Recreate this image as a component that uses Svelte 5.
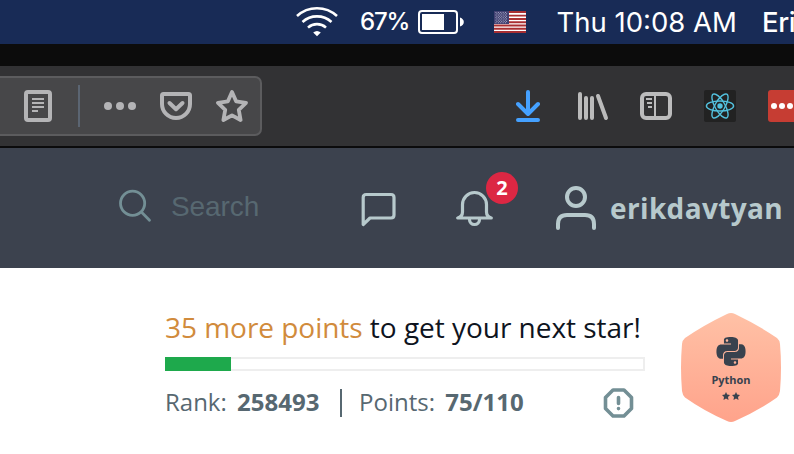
<script>
  const rank = 258493;
  const points = 75;
  const goal = 110;
  const left = goal - points;
  const progress = 13.75;
  const user = 'erikdavtyan';
  const flagStars = [0, 1, 2, 3, 4, 5, 6, 7, 8];
</script>

<div class="screen">
  <div class="menubar">
    <svg class="wifi" viewBox="296 6 42 32" fill="none" stroke="#fff" stroke-width="2.6">
      <path d="M297 16 A29.5 29.5 0 0 1 337 16" />
      <path d="M302.500 22 A21.500 21.500 0 0 1 331.500 22" />
      <path d="M308 27.600 A13.500 13.500 0 0 1 326 27.600" />
      <path d="M313.200 32.600 Q317 29.500 320.800 32.600 L317 36.200Z" fill="#fff" stroke="none" />
    </svg>
    <span class="percent">67%</span>
    <svg class="battery" viewBox="418 9 46 26">
      <rect x="419" y="11" width="38" height="22" rx="3" fill="none" stroke="#fff" stroke-width="2" />
      <rect x="422" y="14" width="22" height="16" fill="#fff" />
      <path d="M460 17.500 Q463.800 19 463.800 22 Q463.800 25 460 26.500Z" fill="#fff" />
    </svg>
    <svg class="flag" viewBox="0 0 32 22">
      <rect width="32" height="22" fill="#fff" />
      <path d="M0 1h32M0 4.600h32M0 8h32M0 11.300h32M0 14.500h32M0 17.700h32M0 21h32" stroke="#a92f32" stroke-width="1.900" />
      <rect width="15" height="13" fill="#414172" />
      {#each flagStars as row}
        <path d="M{row % 2 ? 2.500 : 1.500} {1.500 + row * 1.280}h12" stroke="#c9c9de" stroke-width=".8" stroke-dasharray=".9 1.500" />
      {/each}
    </svg>
    <span class="clock">Thu 10:08 AM</span>
    <span class="owner">Eri</span>
  </div>

  <div class="gap"></div>

  <div class="toolbar">
    <div class="urlbar">
      <svg class="reader" viewBox="24 90 28 32">
        <rect x="26" y="92" width="24" height="28" rx="2" fill="none" stroke="#b4b4b6" stroke-width="4" />
        <path d="M32 99h12M32 103h12M32 107h12M32 111h6" stroke="#b4b4b6" stroke-width="2" />
      </svg>
      <span class="rule"></span>
      <svg class="more" viewBox="104 102 32 8" fill="#b4b4b6">
        <circle cx="108" cy="106" r="4" /><circle cx="120" cy="106" r="4" /><circle cx="132" cy="106" r="4" />
      </svg>
      <svg class="pocket" viewBox="160 91 32 30" fill="none" stroke="#b4b4b6" stroke-width="4" stroke-linecap="round" stroke-linejoin="round">
        <path d="M163.500 94H188.500Q190 94 190 95.500V104A14 14 0 0 1 162 104V95.500Q162 94 163.500 94Z" />
        <path d="M169.500 103L176 109.200L182.500 103" />
      </svg>
      <svg class="star" viewBox="216 90 32 32" fill="none" stroke="#b4b4b6" stroke-width="3.800" stroke-linejoin="round">
        <path d="M232 92L236.100 101.300L246 102.800L238.800 109.800L240.600 120L232 115.300L223.400 120L225.200 109.800L218 102.800L227.900 101.300Z" />
      </svg>
    </div>
    <svg class="download" viewBox="516 90 24 32" fill="none" stroke="#45a1ff" stroke-width="4" stroke-linecap="round" stroke-linejoin="round">
      <path d="M528 92V113M518 104L528 114L538 104M518 120H538" />
    </svg>
    <svg class="library" viewBox="577 90 32 32" stroke="#bbb" stroke-width="4" stroke-linecap="round">
      <path d="M580 94V118M586 98V118M592 98V118M598 96L606 118" />
    </svg>
    <svg class="sidebar" viewBox="640 92 32 28" fill="none" stroke="#bcbcbd">
      <rect x="642" y="94" width="28" height="24" rx="4" stroke-width="4" />
      <path d="M655 95V117" stroke-width="2" />
      <path d="M646 99h6M647 103h5M648 107h4" stroke-width="2" />
    </svg>
    <svg class="react" viewBox="704 90 32 32" fill="none" stroke="#53c1de" stroke-width="1.400">
      <rect x="704" y="90" width="32" height="32" rx="2" fill="#222" stroke="none" />
      <ellipse cx="720" cy="106" rx="13.600" ry="5" />
      <ellipse cx="720" cy="106" rx="13.600" ry="5" transform="rotate(60 720 106)" />
      <ellipse cx="720" cy="106" rx="13.600" ry="5" transform="rotate(120 720 106)" />
      <circle cx="720" cy="106" r="2.700" fill="#53c1de" stroke="none" />
    </svg>
    <svg class="pass" viewBox="768 90 32 32" fill="#fff">
      <rect x="768" y="90" width="32" height="32" rx="3" fill="#c63d33" />
      <circle cx="774" cy="106" r="3" /><circle cx="782" cy="106" r="3" /><circle cx="790" cy="106" r="3" />
    </svg>
  </div>

  <header>
    <svg class="magnifier" viewBox="118 189 34 34" fill="none" stroke="#738f95" stroke-width="2.800" stroke-linecap="round">
      <circle cx="132.600" cy="203.300" r="12.100" /><path d="M141.600 212.200L149.500 220.200" />
    </svg>
    <span class="search">Search</span>
    <svg class="chat" viewBox="360 192 38 36" fill="none" stroke="#b7c9cc" stroke-width="3.200" stroke-linejoin="round">
      <path d="M363.200 224.500V197.500Q363.200 194.500 366.200 194.500H391Q394 194.500 394 197.500V215Q394 218 391 218H370Z" />
    </svg>
    <div class="alerts">
      <svg class="bell" viewBox="455 190 40 38" fill="none" stroke="#b7c9cc" stroke-width="3.200" stroke-linecap="round" stroke-linejoin="round">
        <path d="M457.700 218H491.300Q486.500 216.500 486.500 212V204.500A12 12 0 0 0 462.500 204.500V212Q462.500 216.500 457.700 218Z" />
        <path d="M469.500 219.500A5 5 0 0 0 479.500 219.500" />
      </svg>
      <span class="badge">2</span>
    </div>
    <svg class="person" viewBox="555 185 42 46" fill="none" stroke="#b7c9cc" stroke-width="4" stroke-linecap="round">
      <circle cx="576" cy="197" r="9" />
      <path d="M558 228V224Q558 215 567 215H585Q594 215 594 224V228" />
    </svg>
    <span class="name">{user}</span>
  </header>

  <main>
    <section class="stats">
      <p class="headline"><span class="need">{left} more points</span> to get your next star!</p>
      <div class="track"><div class="fill" style="width: {progress}%"></div></div>
      <div class="figures">
        <span class="rank">Rank: <b>{rank}</b></span>
        <span class="divider"></span>
        <span class="points">Points: <b>{points}/{goal}</b></span>
        <svg class="info" viewBox="603 387 31 31" fill="none" stroke="#738f95" stroke-width="3.600" stroke-linecap="round" stroke-linejoin="round">
          <path d="M613 390H624L631.500 397.500V408.500L624 416H613L605.500 408.500V397.500Z" />
          <path d="M618.500 397.500V403.500M618.500 408.500V408.600" />
        </svg>
      </div>
    </section>
    <div class="medal">
      <svg class="hexagon" viewBox="681 313 100 110">
        <defs>
          <linearGradient id="bronze" x1="0" y1="0" x2="0" y2="1">
            <stop offset="0" stop-color="#ffc1a6" /><stop offset="1" stop-color="#ffa38b" />
          </linearGradient>
        </defs>
        <path fill="url(#bronze)" d="M727 314Q731 312 735 314Q758 325 777 338Q779.500 340 780 344Q782 367.500 780 391Q779.500 395 777 397.500Q758 411 735 421Q731 423 727 421Q704 411 685 397.500Q682.500 395 682 391Q680 367.500 682 344Q682.500 340 685 338Q704 325 727 314Z" />
      </svg>
      <div class="face">
        <svg class="python" viewBox="0 0 24 24" fill="#39424e">
          <path d="M14.25.18l.9.2.73.26.59.3.45.32.34.34.25.34.16.33.1.3.04.26.02.2-.01.13V8.5l-.05.63-.13.55-.21.46-.26.38-.3.31-.33.25-.35.19-.35.14-.33.1-.3.07-.26.04-.21.02H8.77l-.69.05-.59.14-.5.22-.41.27-.33.32-.27.35-.2.36-.15.37-.1.35-.07.32-.04.27-.02.21v3.06H3.17l-.21-.03-.28-.07-.32-.12-.35-.18-.36-.26-.36-.36-.35-.46-.32-.59-.28-.73-.21-.88-.14-1.05-.05-1.23.06-1.22.16-1.04.24-.87.32-.71.36-.57.4-.44.42-.33.42-.24.4-.16.36-.1.32-.05.24-.01h.16l.06.01h8.16v-.83H6.18l-.01-2.75-.02-.37.05-.34.11-.31.17-.28.25-.26.31-.23.38-.2.44-.18.51-.15.58-.12.64-.1.71-.06.77-.04.84-.02 1.27.05zm-6.3 1.98l-.23.33-.08.41.08.41.23.34.33.22.41.09.41-.09.33-.22.23-.34.08-.41-.08-.41-.23-.33-.33-.22-.41-.09-.41.09zm13.09 3.95l.28.06.32.12.35.18.36.27.36.35.35.47.32.59.28.73.21.88.14 1.04.05 1.23-.06 1.23-.16 1.04-.24.86-.32.71-.36.57-.4.45-.42.33-.42.24-.4.16-.36.09-.32.05-.24.02-.16-.01h-8.22v.82h5.84l.01 2.76.02.36-.05.34-.11.31-.17.29-.25.25-.31.24-.38.2-.44.17-.51.15-.58.13-.64.09-.71.07-.77.04-.84.01-1.27-.04-1.07-.14-.9-.2-.73-.25-.59-.3-.45-.33-.34-.34-.25-.34-.16-.33-.1-.3-.04-.25-.02-.2.01-.13v-5.34l.05-.64.13-.54.21-.46.26-.38.3-.32.33-.24.35-.2.35-.14.33-.1.3-.06.26-.04.21-.02.13-.01h5.84l.69-.05.59-.14.5-.21.41-.28.33-.32.27-.35.2-.36.15-.36.1-.35.07-.32.04-.28.02-.21V6.07h2.09l.14.01zm-6.47 14.25l-.23.33-.08.41.08.41.23.33.33.23.41.08.41-.08.33-.23.23-.33.08-.41-.08-.41-.23-.33-.33-.23-.41-.08-.41.08z" />
        </svg>
        <span class="skill">Python</span>
        <svg class="stars" viewBox="0 0 18 8" fill="#39424e">
          <path d="M4 0L5.200 2.600L8 3L6 5L6.500 8L4 6.600L1.500 8L2 5L0 3L2.800 2.600Z" />
          <path transform="translate(10)" d="M4 0L5.200 2.600L8 3L6 5L6.500 8L4 6.600L1.500 8L2 5L0 3L2.800 2.600Z" />
        </svg>
      </div>
    </div>
  </main>
</div>

<style>
  :global(body) { margin: 0; overflow: hidden; }
  .screen { width: 794px; height: 454px; overflow: hidden; background: #fff; font-family: "Open Sans", sans-serif; }
  svg { display: block; flex: none; }
  span { white-space: nowrap; }

  .menubar { display: flex; align-items: center; box-sizing: border-box; height: 44px; padding-left: 296px; overflow: hidden; background: #182b56; color: #fff; font-family: Inter, sans-serif; }
  .menubar span { flex: none; line-height: 44px; }
  .wifi { width: 42px; height: 32px; }
  .percent { width: 58px; margin-left: 22px; font-size: 24px; font-weight: 500; letter-spacing: -1.2px; }
  .battery { width: 46px; height: 26px; }
  .flag { width: 32px; height: 22px; margin-left: 30px; }
  .clock { width: 205px; margin-left: 31px; font-size: 27.500px; }
  .clock { text-indent: -0.5px; }
  .owner { font-size: 27.500px; font-weight: 500; letter-spacing: -0.4px; }

  .gap { height: 22px; background: #0c0c0c; }

  .toolbar { display: flex; align-items: center; box-sizing: border-box; height: 82px; border-bottom: 2px solid #0b0b0c; background: #323234; overflow: hidden; }
  .urlbar { display: flex; align-items: center; flex: none; box-sizing: border-box; width: 262px; height: 60px; padding-left: 24px; border: solid #5c5c5e; border-width: 2px 2px 2px 0; border-radius: 0 7px 7px 0; background: #474749; }
  .reader { width: 28px; height: 32px; }
  .rule { width: 2px; height: 42px; margin: 0 24px 0 26px; background: #5b6572; }
  .more { width: 32px; height: 8px; }
  .pocket { width: 32px; height: 30px; margin: 0 24px; }
  .star { width: 32px; height: 32px; }
  .download { width: 24px; height: 32px; margin-left: 254px; }
  .library { width: 32px; height: 32px; margin-left: 37px; }
  .sidebar { width: 32px; height: 28px; margin-left: 31px; }
  .react, .pass { width: 32px; height: 32px; margin-left: 32px; }

  header { display: flex; align-items: flex-start; box-sizing: border-box; height: 120px; padding-left: 118px; background: #3c424e; overflow: hidden; }
  .magnifier { width: 34px; height: 34px; margin-top: 41px; }
  .search { width: 89px; margin: 42px 0 0 19px; color: #576871; font: 28px/34px "Liberation Sans", sans-serif; letter-spacing: -0.1px; }
  .chat { width: 38px; height: 36px; margin: 44px 0 0 100px; }
  .alerts { position: relative; margin: 42px 0 0 57px; }
  .bell { width: 40px; height: 38px; }
  .badge { position: absolute; left: 31px; top: -18px; width: 32px; height: 32px; border-radius: 50%; background: #dc2743; color: #fff; font-size: 20px; font-weight: 700; line-height: 32px; text-align: center; }
  .person { width: 42px; height: 46px; margin: 37px 0 0 60px; }
  .name { margin: 41px 0 0 13px; color: #b7c9cc; font-size: 28px; font-weight: 700; line-height: 38px; letter-spacing: 0.36px; }

  main { display: flex; padding: 39px 0 0 165px; }
  .stats { flex: none; width: 480px; }
  .headline { margin: 0; color: #0e141e; font-size: 28px; line-height: 40px; letter-spacing: -0.03px; white-space: nowrap; }
  .need { color: #d18b3c; }
  .track { box-sizing: border-box; height: 14px; margin-top: 10px; background: linear-gradient(#fff, #fff) 0 2px / 478px 10px no-repeat #eee; }
  .fill { height: 14px; background: #1ea94c; }
  .figures { display: flex; align-items: center; height: 32px; margin-top: 16px; color: #576871; font-size: 24px; line-height: 30px; }
  .rank, .points { padding-bottom: 2px; }
  .rank { width: 175px; }
  .rank b, .points b { margin-left: 4px; }
  .divider { width: 2px; height: 28px; background: #576871; }
  .points { width: 244px; padding-left: 17px; }
  .info { width: 31px; height: 31px; margin-bottom: 1px; }
  .medal { position: relative; width: 100px; height: 110px; margin: 6px 0 0 36px; }
  .hexagon { width: 100px; height: 110px; }
  .face { position: absolute; inset: 0; display: flex; flex-direction: column; align-items: center; padding-top: 24px; }
  .python { width: 30px; height: 29px; }
  .skill { margin-top: 6px; color: #39424e; font-size: 11px; font-weight: 700; line-height: 16px; }
  .stars { width: 18px; height: 8px; margin-top: 4px; }
</style>
